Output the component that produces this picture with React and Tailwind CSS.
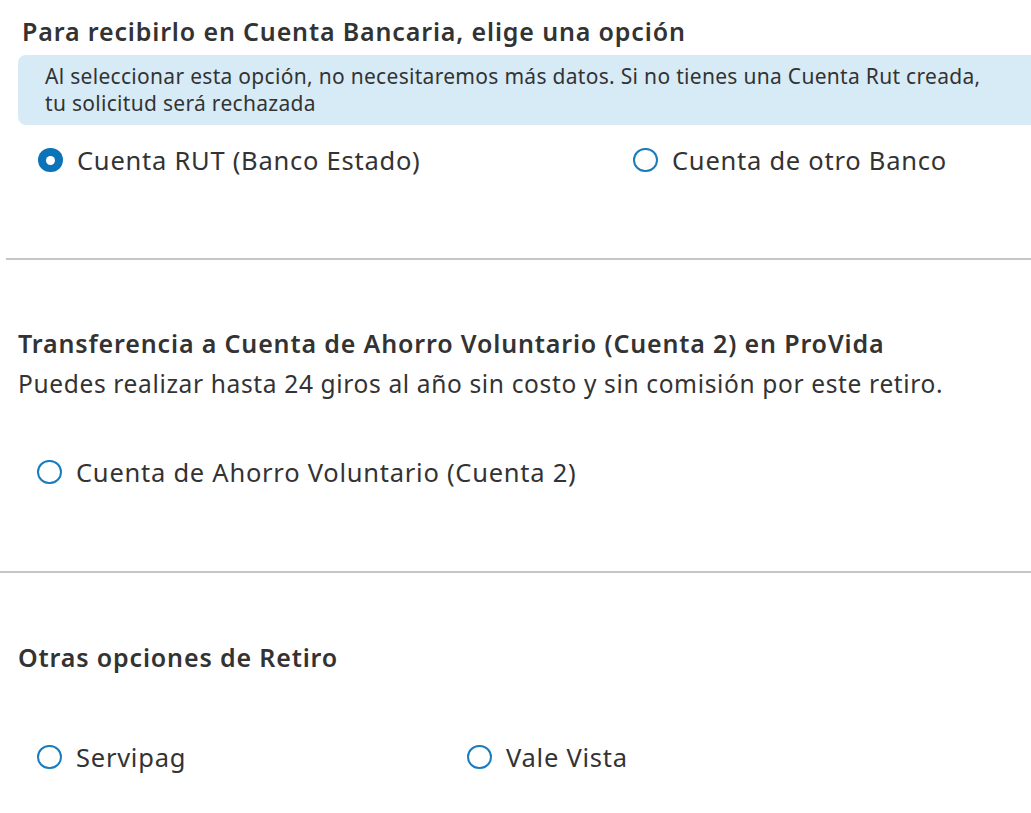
import React, { useState } from "react";

function Radio({ label, checked, onChange, className = "" }) {
  return (
    <label className={`flex items-center gap-[14px] cursor-pointer h-8 ${className}`}>
      <span
        className={
          checked
            ? "w-[25px] h-[24px] rounded-full bg-[#0b73b8] flex items-center justify-center shrink-0"
            : "w-[25px] h-[24px] rounded-full border-2 border-[#1a7cbf] shrink-0"
        }
      >
        {checked && <span className="w-[9px] h-[9px] rounded-full bg-white" />}
      </span>
      <span className="text-[25.5px] tracking-[0.75px] leading-8 whitespace-nowrap">{label}</span>
      <input type="radio" className="hidden" checked={checked} onChange={onChange} />
    </label>
  );
}

export default function App() {
  const [choice, setChoice] = useState("rut");

  return (
    <div className="w-[1031px] h-[813px] overflow-hidden bg-white text-[#333333] font-['Noto_Sans','Open_Sans',sans-serif]">
      {/* cuenta bancaria */}
      <div className="pt-[15px]">
        <h2 className="pl-[22px] text-[25px] tracking-[0.85px] leading-8 font-semibold">
          Para recibirlo en Cuenta Bancaria, elige una opción
        </h2>
        <div className="mt-2 ml-[18px] rounded-l-lg bg-[#d7ebf7] py-2 pl-[27px] text-[21px] tracking-[0.3px] leading-[27px] whitespace-nowrap">
          Al seleccionar esta opción, no necesitaremos más datos. Si no tienes una Cuenta Rut creada,
          <br />
          tu solicitud será rechazada
        </div>
        <div className="mt-[19px] flex">
          <Radio
            className="ml-[38px] w-[595px]"
            label="Cuenta RUT (Banco Estado)"
            checked={choice === "rut"}
            onChange={() => setChoice("rut")}
          />
          <Radio
            label="Cuenta de otro Banco"
            checked={choice === "otro"}
            onChange={() => setChoice("otro")}
          />
        </div>
      </div>

      <div className="mt-[82px] ml-[6px] h-[2px] bg-[#c6c6c6]" />

      {/* cuenta 2 */}
      <div className="mt-[67px] pl-[18px]">
        <h2 className="text-[25px] tracking-[0.85px] leading-8 font-semibold whitespace-nowrap">
          Transferencia a Cuenta de Ahorro Voluntario (Cuenta 2) en ProVida
        </h2>
        <p className="mt-[9px] text-[24.5px] tracking-[0.65px] leading-8 whitespace-nowrap">
          Puedes realizar hasta 24 giros al año sin costo y sin comisión por este retiro.
        </p>
        <div className="mt-[56px] flex">
          <Radio
            className="ml-[19px]"
            label="Cuenta de Ahorro Voluntario (Cuenta 2)"
            checked={choice === "cuenta2"}
            onChange={() => setChoice("cuenta2")}
          />
        </div>
      </div>

      <div className="mt-[83px] h-[2px] bg-[#c6c6c6]" />

      {/* otras opciones */}
      <div className="mt-[68px] pl-[18px]">
        <h2 className="text-[25px] tracking-[0.85px] leading-8 font-semibold">Otras opciones de Retiro</h2>
        <div className="mt-[68px] flex">
          <Radio
            className="ml-[19px] w-[430px]"
            label="Servipag"
            checked={choice === "servipag"}
            onChange={() => setChoice("servipag")}
          />
          <Radio
            label="Vale Vista"
            checked={choice === "vale"}
            onChange={() => setChoice("vale")}
          />
        </div>
      </div>
    </div>
  );
}
